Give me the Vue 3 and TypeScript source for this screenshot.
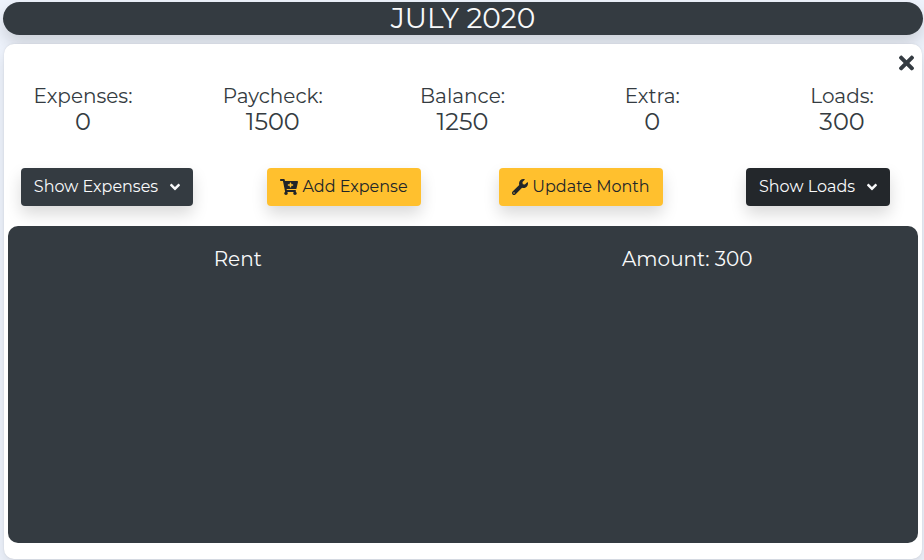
<script setup lang="ts">
import { ref } from 'vue'

interface Stat {
  label: string
  value: number
}

interface Expense {
  name: string
  amount: number
}

const month = 'JULY 2020'
const stats: Stat[] = [
  { label: 'Expenses:', value: 0 },
  { label: 'Paycheck:', value: 1500 },
  { label: 'Balance:', value: 1250 },
  { label: 'Extra:', value: 0 },
  { label: 'Loads:', value: 300 },
]
const loads: Expense[] = [{ name: 'Rent', amount: 300 }]
const open = ref(true)
</script>

<template>
  <main class="page">
    <h1 class="month">{{ month }}</h1>
    <section class="card">
      <div class="card-top">
        <button type="button" class="close" aria-label="Close">
          <svg viewBox="0 0 352 512" aria-hidden="true">
            <path d="M242.72 256l100.07-100.07c12.28-12.28 12.28-32.19 0-44.48l-22.24-22.24c-12.28-12.28-32.19-12.28-44.48 0L176 189.28 75.93 89.21c-12.28-12.28-32.19-12.28-44.48 0L9.21 111.45c-12.28 12.28-12.28 32.19 0 44.48L109.28 256 9.21 356.07c-12.28 12.28-12.28 32.19 0 44.48l22.24 22.24c12.28 12.28 32.2 12.28 44.48 0L176 322.72l100.07 100.07c12.28 12.28 32.2 12.28 44.48 0l22.24-22.24c12.28-12.28 12.28-32.19 0-44.48L242.72 256z" />
          </svg>
        </button>
      </div>
      <dl class="stats">
        <div v-for="s in stats" :key="s.label" class="stat">
          <dt>{{ s.label }}</dt>
          <dd>{{ s.value }}</dd>
        </div>
      </dl>
      <div class="actions">
        <div class="action">
          <button type="button" class="btn dark">
            Show Expenses
            <svg class="angle" viewBox="0 0 320 512" aria-hidden="true">
              <path d="M143 352.3L7 216.3c-9.4-9.4-9.4-24.6 0-33.9l22.6-22.6c9.4-9.4 24.6-9.4 33.9 0l96.4 96.4 96.4-96.4c9.4-9.4 24.6-9.4 33.9 0l22.6 22.6c9.4 9.4 9.4 24.6 0 33.9l-136 136c-9.2 9.4-24.4 9.4-33.8 0z" />
            </svg>
          </button>
        </div>
        <div class="action">
          <button type="button" class="btn amber">
            <svg class="cart" viewBox="0 0 576 512" aria-hidden="true">
              <path d="M504.717 320H211.572l6.545 32h268.418c15.401 0 26.816 14.301 23.403 29.319l-5.517 24.276C523.112 414.668 536 433.828 536 456c0 31.202-25.519 56.444-56.824 55.994-29.823-.429-54.35-24.631-55.155-54.447-.44-16.287 6.085-31.049 16.803-41.548H231.176C241.553 426.165 248 440.326 248 456c0 31.813-26.528 57.431-58.67 55.938-28.54-1.325-51.751-24.385-53.251-52.917-1.158-22.034 10.436-41.455 28.051-51.586L93.883 64H24C10.745 64 0 53.255 0 40V24C0 10.745 10.745 0 24 0h102.529c11.401 0 21.228 8.021 23.513 19.19L159.208 64H551.99c15.401 0 26.816 14.301 23.403 29.319l-47.273 208C525.637 312.246 515.923 320 504.717 320zM408 168h-48v-40c0-8.837-7.163-16-16-16h-16c-8.837 0-16 7.163-16 16v40h-48c-8.837 0-16 7.163-16 16v16c0 8.837 7.163 16 16 16h48v40c0 8.837 7.163 16 16 16h16c8.837 0 16-7.163 16-16v-40h48c8.837 0 16-7.163 16-16v-16c0-8.837-7.163-16-16-16z" />
            </svg>
            Add Expense
          </button>
        </div>
        <div class="action">
          <button type="button" class="btn amber">
            <svg class="wrench" viewBox="0 0 512 512" aria-hidden="true">
              <path d="M507.73 109.1c-2.24-9.03-13.54-12.09-20.12-5.51l-74.36 74.36-67.88-11.31-11.31-67.88 74.36-74.36c6.62-6.62 3.43-17.9-5.66-20.16-47.38-11.74-99.55.91-136.58 37.93-39.64 39.64-50.55 97.1-34.05 147.2L18.74 402.76c-24.99 24.99-24.99 65.51 0 90.5 24.99 24.99 65.51 24.99 90.5 0l213.21-213.21c50.12 16.71 107.47 5.68 147.37-34.22 37.07-37.07 49.7-89.32 37.91-136.73zM64 472c-13.25 0-24-10.75-24-24 0-13.26 10.75-24 24-24s24 10.74 24 24c0 13.25-10.75 24-24 24z" />
            </svg>
            Update Month
          </button>
        </div>
        <div class="action">
          <button type="button" class="btn black" :aria-expanded="open" @click="open = !open">
            Show Loads
            <svg class="angle" viewBox="0 0 320 512" aria-hidden="true">
              <path d="M143 352.3L7 216.3c-9.4-9.4-9.4-24.6 0-33.9l22.6-22.6c9.4-9.4 24.6-9.4 33.9 0l96.4 96.4 96.4-96.4c9.4-9.4 24.6-9.4 33.9 0l22.6 22.6c9.4 9.4 9.4 24.6 0 33.9l-136 136c-9.2 9.4-24.4 9.4-33.8 0z" />
            </svg>
          </button>
        </div>
      </div>
      <div v-if="open" class="panel">
        <div v-for="l in loads" :key="l.name" class="entry">
          <span>{{ l.name }}</span>
          <span>Amount: {{ l.amount }}</span>
        </div>
      </div>
    </section>
  </main>
</template>

<style>
body {
  background: #eef3fc;
}
</style>

<style scoped>
.page {
  box-sizing: border-box;
  display: flex;
  flex-direction: column;
  min-height: 100vh;
  padding: 2px 1px 1px 3px;
  color: #343b41;
  font-family: Montserrat, Inter, 'Open Sans', sans-serif;
  font-weight: 400;
}
.month {
  margin: 0;
  border-radius: 17px;
  background: #343b41;
  box-shadow: 0 8px 16px rgba(0, 0, 0, 0.15);
  color: #f8f9fa;
  font-size: 28px;
  font-weight: 400;
  line-height: 33px;
  text-align: center;
}
.card {
  display: flex;
  flex: 1;
  flex-direction: column;
  margin: 9px 1px 0;
  border-radius: 10px;
  background: #fff;
  box-shadow: 0 0 2px rgba(0, 0, 0, 0.1), 0 8px 16px rgba(0, 0, 0, 0.1);
}
.card-top {
  display: flex;
  justify-content: flex-end;
  padding: 8px 8px 0;
}
.close {
  display: flex;
  padding: 0;
  border: 0;
  background: none;
  color: #343b41;
}
.close svg {
  width: 15px;
  height: 22px;
}
svg {
  fill: currentColor;
}
.stats {
  display: flex;
  justify-content: space-between;
  margin: 8px 0 0;
  padding-right: 1px;
}
.stat {
  width: 158px;
  text-align: center;
}
dt {
  font-size: 20px;
  line-height: 28px;
}
dd {
  margin: 0;
  font-size: 24px;
  line-height: 24px;
}
.actions {
  display: flex;
  justify-content: space-between;
  margin-top: 34px;
  padding-right: 1px;
}
.action {
  display: flex;
  justify-content: center;
  width: 206px;
}
.btn {
  display: flex;
  align-items: center;
  padding: 0 13px;
  border: 0;
  border-radius: 4px;
  box-shadow: 0 8px 16px rgba(0, 0, 0, 0.15);
  font-family: inherit;
  font-size: 16px;
  font-weight: 400;
  line-height: 38px;
  white-space: nowrap;
}
.dark {
  background: #343b41;
  color: #f8f9fa;
}
.black {
  background: #23272b;
  color: #f8f9fa;
}
.amber {
  background: #ffc02e;
  color: #212529;
}
.btn svg {
  height: 16px;
}
.angle {
  width: 10px;
  margin-left: 12px;
}
.cart {
  width: 18px;
  margin-right: 4px;
}
.wrench {
  width: 16px;
  margin-right: 4px;
}
.panel {
  flex: 1;
  margin: 20px 4px 16px;
  padding: 18px 6px 18px 5px;
  border-radius: 10px;
  background: #343b41;
  color: #f8f9fa;
}
.entry {
  display: grid;
  grid-template-columns: 1fr 1fr;
  font-size: 20px;
  line-height: 30px;
  text-align: center;
}
</style>
